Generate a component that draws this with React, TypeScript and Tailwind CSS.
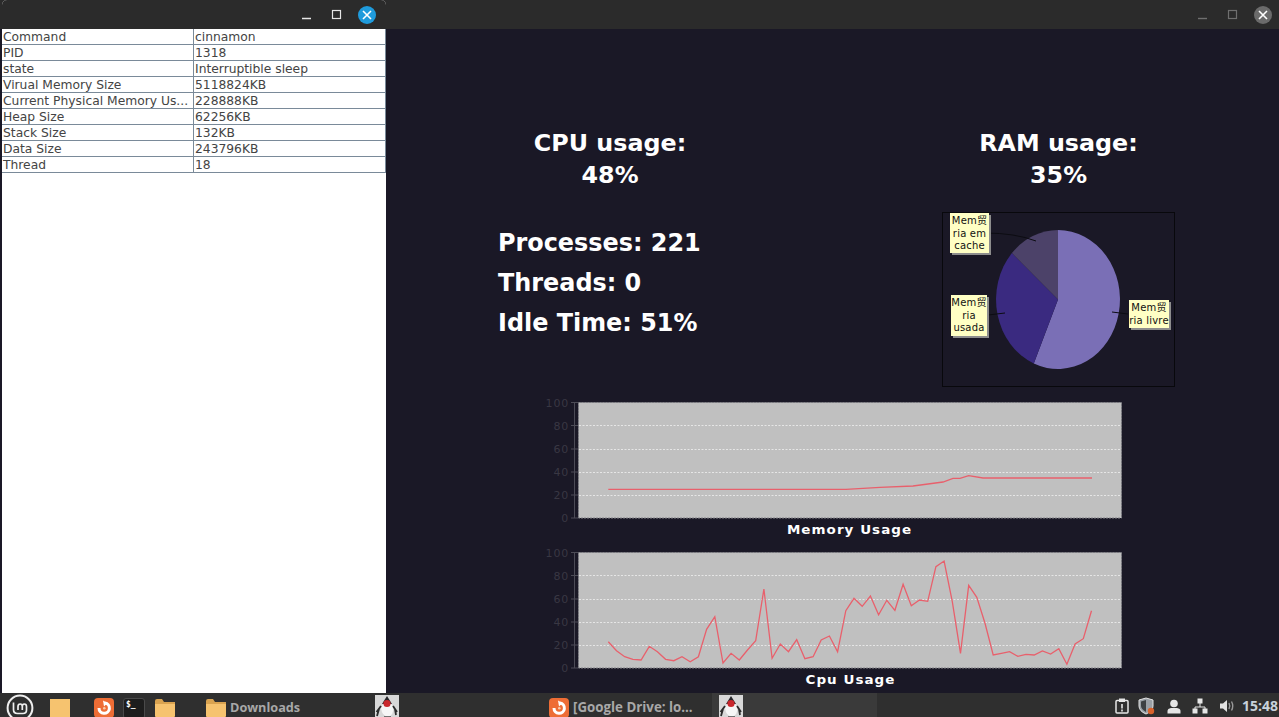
const rows = [
  ["Command", "cinnamon"],
  ["PID", "1318"],
  ["state", "Interruptible sleep"],
  ["Virual Memory Size", "5118824KB"],
  ["Current Physical Memory Us...", "228888KB"],
  ["Heap Size", "62256KB"],
  ["Stack Size", "132KB"],
  ["Data Size", "243796KB"],
  ["Thread", "18"],
];

// y values read off the chart, x steps evenly
const cpuY = [
  290, 317, 335, 343, 345, 304, 320, 343, 347, 335, 350, 335, 253, 215, 354, 325, 345, 315, 287, 132,
  340, 297, 320, 284, 341, 335, 285, 273, 320, 197, 160, 184, 153, 209, 166, 196, 118, 182, 165, 169,
  65, 48, 170, 325, 121, 157, 235, 330, 325, 320, 334, 328, 330, 318, 327, 311, 358, 297, 281, 197,
];
const cpuPoints = cpuY.map((y, i) => `${(78.3 + i * 8.19).toFixed(1)},${(y / 3).toFixed(1)}`).join(" ");
const memoryPoints =
  "78.3,94.3 316,94.3 350,92.3 383,91 413,87 423,83.3 430,83.3 438.7,80.7 453,83 562,83";

function Chart({ title, points }: { title: string; points: string }) {
  const ticks = [
    ["100", 7.5],
    ["80", 30.5],
    ["60", 54],
    ["40", 77],
    ["20", 100],
    ["0", 123],
  ] as const;
  return (
    <div className="w-[600px]">
      <svg width="600" height="131" viewBox="0 0 600 131" className="block">
        <rect x="48.5" y="7.5" width="543" height="115.5" fill="#c0c0c0" stroke="#85848a" strokeDasharray="2 1" />
        {[30.5, 54.5, 77.5, 100.5].map((y) => (
          <line key={y} x1="49" x2="590" y1={y} y2={y} stroke="#e6e6e6" strokeDasharray="2 1.5" />
        ))}
        <line x1="44.5" x2="44.5" y1="7" y2="123" stroke="#4c4b56" />
        {ticks.map(([label, y]) => (
          <g key={label}>
            <line x1="41" x2="48" y1={y} y2={y} stroke="#4c4b56" />
            <text
              x="39"
              y={y + 4}
              textAnchor="end"
              fill="#393743"
              fontSize="11"
              letterSpacing="0.8"
              fontFamily="'DejaVu Sans', sans-serif"
            >
              {label}
            </text>
          </g>
        ))}
        <polyline points={points} fill="none" stroke="#e8606c" strokeWidth="1.3" />
      </svg>
      <div className="-mt-[3px] h-[15px] pl-[40px] text-center font-['DejaVu_Sans',sans-serif] text-[11.5px] leading-[14px] font-bold text-white">
        <span className="inline-block scale-x-[1.17] tracking-[0.9px]">{title}</span>
      </div>
    </div>
  );
}

function PieLabel({ x, y, w, h, lines }: { x: number; y: number; w: number; h: number; lines: string[] }) {
  return (
    <g>
      <rect x={x + 2} y={y + 2} width={w} height={h} fill="#8d8d8d" />
      <rect x={x} y={y} width={w} height={h} fill="#ffffc4" />
      {lines.map((line, i) => (
        <text
          key={line}
          x={x + w / 2}
          y={y + 11 + i * 12.5}
          textAnchor="middle"
          fill="#111"
          fontSize="10"
          letterSpacing="0.2"
          fontFamily="'DejaVu Sans', 'Noto Sans CJK SC', sans-serif"
        >
          {line}
        </text>
      ))}
    </g>
  );
}

function PieChart() {
  return (
    <svg width="233" height="175" viewBox="942 212 233 175" className="block">
      <rect x="942.5" y="212.5" width="232" height="174" fill="none" stroke="#08080c" />
      <path d="M1058 299.5 L1058 230 A62 69.5 0 1 1 1033.8 363.5 Z" fill="#7a6fb6" />
      <path d="M1058 299.5 L1033.8 363.5 A62 69.5 0 0 1 1011.9 253.1 Z" fill="#3a2a80" />
      <path d="M1058 299.5 L1011.9 253.1 A62 69.5 0 0 1 1058 230 Z" fill="#4c4269" />
      <path d="M1112 312 L1128 314 M988 315 L1005 313 M985 233 Q1015 233 1036 241" stroke="#0c0c12" fill="none" />
      <PieLabel x={950} y={213} w={39} h={40} lines={["Mem贸", "ria em", "cache"]} />
      <PieLabel x={951} y={295} w={36} h={41} lines={["Mem贸", "ria", "usada"]} />
      <PieLabel x={1129} y={300} w={40} h={28} lines={["Mem贸", "ria livre"]} />
    </svg>
  );
}

function WindowButtons({ focused }: { focused: boolean }) {
  const line = focused ? "#e6e6e6" : "#6f6f6f";
  return (
    <svg width="90" height="29" viewBox="0 0 90 29" className="block">
      <line x1="10" x2="19" y1="18.5" y2="18.5" stroke={line} strokeWidth="1.4" />
      <rect x="40.5" y="10.5" width="8" height="8" fill="none" stroke={line} strokeWidth="1.2" />
      <circle cx="75" cy="15" r="9" fill={focused ? "#1f9bdc" : "#6b6b6b"} />
      <path d="M71 11 L79 19 M79 11 L71 19" stroke="#fff" strokeWidth="1.6" />
    </svg>
  );
}

function FolderIcon({ tab = true }: { tab?: boolean }) {
  return (
    <svg width="22" height="20" viewBox="0 0 22 20" className="block">
      {tab && <path d="M1 3 Q1 1 3 1 H8 L10 4 H21 V8 H1 Z" fill="#d9a350" />}
      <path d={tab ? "M1 6 H21 V18 Q21 19 20 19 H2 Q1 19 1 18 Z" : "M1 1 H21 V20 H1 Z"} fill="#f6c36f" />
    </svg>
  );
}

function BrowserIcon() {
  return (
    <svg width="20" height="20" viewBox="0 0 20 20" className="block">
      <rect width="20" height="20" rx="4" fill="#ee6d35" />
      <path d="M5 10 A5.2 5.2 0 1 0 11 5" fill="none" stroke="#fff" strokeWidth="3" />
      <path d="M9 2.5 L13.5 5 L10 8.5 Z" fill="#fff" />
      <circle cx="10.3" cy="10.2" r="1.3" fill="#f9c9a8" />
    </svg>
  );
}

function TerminalIcon() {
  return (
    <div className="flex h-[21px] w-[22px] items-start rounded-[3px] border border-[#4a4a4a] bg-[#1d1d1d] px-[2px] font-['DejaVu_Sans_Mono',monospace] text-[8px] leading-[11px] font-bold text-white">
      $_
    </div>
  );
}

function DukeIcon() {
  return (
    <svg width="24" height="24" viewBox="0 0 24 24" className="-mt-[3px] block">
      <rect width="24" height="24" fill="#d8d8d8" />
      <path d="M12 2 L18 12 Q19 20 13 22 Q7 21 6 13 Z" fill="#f6f6f6" />
      <path d="M12 1 L17 9 L7 9 Z" fill="#26262a" />
      <circle cx="12" cy="8.5" r="3.6" fill="#c9282d" />
      <path d="M6 11 L1.5 17 M18 11 L22 17 M4 14 L2 21 M20 14 L21 20" stroke="#2b2b2b" strokeWidth="1.8" />
      <path d="M9 22 H16" stroke="#555" strokeWidth="1.6" />
    </svg>
  );
}

function MintLogo() {
  return (
    <svg width="28" height="28" viewBox="0 0 28 28" className="-mt-1 block">
      <circle cx="14" cy="14" r="12.4" fill="none" stroke="#efefef" strokeWidth="2" />
      <path
        d="M7.5 8.5 V15.5 Q7.5 19.5 11.5 19.5 H17 Q20.5 19.5 20.5 16 V12.5 Q20.5 10 18.3 10 Q16.3 10 16.3 12.5 V16 M16.3 12.5 Q16.3 10 14.2 10 Q12 10 12 12.5 V16"
        fill="none"
        stroke="#efefef"
        strokeWidth="1.7"
      />
    </svg>
  );
}

function TrayIcons() {
  return (
    <div className="-mr-[4px] flex items-center gap-[11px]">
      <svg width="14" height="16" viewBox="0 0 14 16" className="-mr-[2px]">
        <rect x="1" y="2.5" width="12" height="12.5" rx="1" fill="none" stroke="#e6e6e6" strokeWidth="1.5" />
        <rect x="4" y="0.5" width="6" height="3.5" fill="#e6e6e6" />
        <path d="M7 6 V10.5 M7 11.5 V13.5" stroke="#e6e6e6" strokeWidth="1.6" />
      </svg>
      <svg width="18" height="18" viewBox="0 0 18 18">
        <path d="M8 1 L15 3 V9 Q15 14 8 17 Q1 14 1 9 V3 Z" fill="#9aa0a6" stroke="#e2e2e2" strokeWidth="1" />
        <path d="M8 3 L3 4.5 V9 Q3 12 8 15 Z" fill="#3c4043" />
        <circle cx="13" cy="14" r="3.2" fill="#d9622b" />
      </svg>
      <svg width="14" height="15" viewBox="0 0 14 15">
        <circle cx="7" cy="4.5" r="3.8" fill="#e6e6e6" />
        <path d="M0.5 14.5 V12 Q0.5 9.5 4 9 H10 Q13.5 9.5 13.5 12 V14.5 Z" fill="#e6e6e6" />
      </svg>
      <svg width="16" height="16" viewBox="0 0 16 16">
        <path d="M8 5 V9 M3 12 V9 H13 V12" fill="none" stroke="#e6e6e6" />
        <rect x="5.5" y="0.5" width="5" height="5" fill="#e6e6e6" />
        <rect x="0.5" y="10.5" width="5" height="5" fill="#e6e6e6" />
        <rect x="10.5" y="10.5" width="5" height="5" fill="#e6e6e6" />
      </svg>
      <svg width="16" height="16" viewBox="0 0 16 16">
        <path d="M1 5.5 H4 L8 2 V14 L4 10.5 H1 Z" fill="#e2e2e2" />
        <path d="M10 5 Q11.5 8 10 11 M12.5 3.5 Q15 8 12.5 12.5" fill="none" stroke="#9a9a9a" strokeWidth="1.4" />
      </svg>
    </div>
  );
}

export default function App() {
  return (
    <div className="relative flex h-[717px] w-[1279px] flex-col overflow-hidden bg-[#1a1826] font-['DejaVu_Sans',sans-serif]">
      <div className="flex h-[29px] shrink-0 justify-end bg-[#2b2b2b] pr-[1px]">
        <WindowButtons focused={false} />
      </div>

      <main className="h-[664px] shrink-0 pl-[386px]">
        <div className="flex pt-[98px] pl-[112px]">
          <div className="w-[224px]">
            <h2 className="text-center text-[23.8px] leading-8 font-bold text-white">
              CPU usage:
              <br />
              48%
            </h2>
            <div className="mt-8 whitespace-nowrap text-[23.9px] leading-10 font-bold text-white">
              <p>Processes: 221</p>
              <p>Threads: 0</p>
              <p>Idle Time: 51%</p>
            </div>
          </div>
          <div className="ml-[220px] w-[233px]">
            <h2 className="text-center text-[23.8px] leading-8 font-bold text-white">
              RAM usage:
              <br />
              35%
            </h2>
            <div className="mt-[21px]">
              <PieChart />
            </div>
          </div>
        </div>
        <div className="mt-2 ml-[144px] flex flex-col gap-[7px]">
          <Chart title="Memory Usage" points={memoryPoints} />
          <Chart title="Cpu Usage" points={cpuPoints} />
        </div>
      </main>

      <div className="absolute top-0 left-[2px] flex h-[693px] w-[384px] flex-col overflow-hidden rounded-t-[5px] bg-white">
        <div className="flex h-[29px] shrink-0 justify-end bg-[#2b2b2b] pr-[4px]">
          <WindowButtons focused />
        </div>
        <div className="text-[12.3px] leading-[14px] text-[#444]">
          {rows.map(([label, value]) => (
            <div key={label} className="flex h-4 border-b border-[#7a8a99]">
              <div className="w-[192px] truncate border-r border-[#7a8a99] pt-px pl-[1px]">{label}</div>
              <div className="flex-1 truncate border-r border-[#7a8a99] pt-px pl-[1px]">{value}</div>
            </div>
          ))}
        </div>
      </div>

      <footer className="flex h-6 shrink-0 items-start overflow-hidden bg-[#2f2f2f] pt-[5px] font-['Open_Sans',sans-serif] text-[13px] leading-[18px] font-bold text-[#a8a8a8]">
        <div className="ml-[6px] w-[43px]">
          <MintLogo />
        </div>
        <div className="w-[45px]">
          <FolderIcon tab={false} />
        </div>
        <div className="w-[29px]">
          <BrowserIcon />
        </div>
        <div className="w-[31px]">
          <TerminalIcon />
        </div>
        <div className="w-[42px]">
          <FolderIcon />
        </div>
        <div className="flex w-[172px] gap-[3px] pl-[9px]">
          <FolderIcon />
          <span className="text-[12.7px]">Downloads</span>
        </div>
        <div className="w-[172px] pl-[7px]">
          <DukeIcon />
        </div>
        <div className="flex w-[172px] gap-[4px] pl-[9px]">
          <BrowserIcon />
          <span className="text-[13.3px]">[Google Drive: lo...</span>
        </div>
        <div className="-mt-[5px] flex h-6 w-[165px] bg-[#3a3a3a] pt-[5px] pl-[7px]">
          <DukeIcon />
        </div>
        <div className="-mt-[1px] ml-auto flex items-center gap-[11px] pr-[1px]">
          <TrayIcons />
          <span className="text-[14px] text-[#c8d2da]">15:48</span>
        </div>
      </footer>
    </div>
  );
}
